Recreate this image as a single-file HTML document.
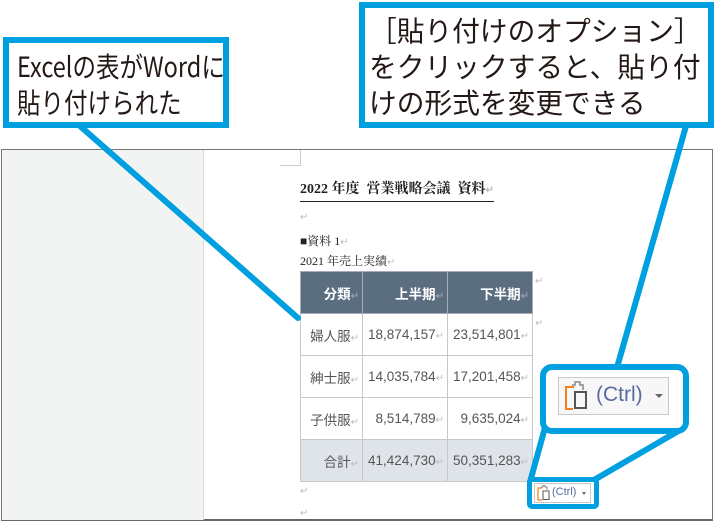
<!DOCTYPE html>
<html><head><meta charset="utf-8"><style>
body{margin:0;width:715px;height:524px;position:relative;overflow:hidden;background:#fff;font-family:"Liberation Sans","Noto Sans CJK JP",sans-serif}
.abs{position:absolute}
.win{left:1px;top:149px;width:712px;height:372px;border:1px solid #777;border-bottom:2px solid #666;box-sizing:border-box}
.side{left:2px;top:150px;width:201px;height:370px;background:#f2f3f3;border-right:1px solid #d8d8d8}
.box{border:6px solid #00a0e0;background:#fff;box-sizing:border-box;color:#231815;font-size:27px;line-height:36px;font-family:"Noto Sans CJK JP",sans-serif;white-space:nowrap;overflow:hidden}
.sx{display:inline-block;transform:scaleX(0.84);transform-origin:left}
.serif{font-family:"Liberation Serif","Noto Serif CJK SC",serif;color:#222}
table{border-collapse:collapse;position:absolute;left:300px;top:271px;font-family:"Liberation Sans","Noto Sans CJK JP",sans-serif;font-size:13.5px;color:#555}
td{border:1px solid #c8c8c8;text-align:right;padding:0 3px 0 0;height:42px;box-sizing:border-box}
.h td{background:#5b6e80;color:#fff;font-weight:bold;border-color:#aab}
.t td{background:#dfe4ea}
.m{color:#bbb;font-size:10px}
</style></head><body>
<div class="abs win"></div>
<div class="abs side"></div>
<div class="abs" style="left:280px;top:150px;width:20px;height:15px;border-right:1px solid #ccc;border-bottom:1px solid #ccc"></div>
<div class="abs serif" style="left:300px;top:178px;font-size:14px;font-weight:bold;border-bottom:1.5px solid #222;padding-bottom:3px;white-space:pre">2022 年度  営業戦略会議  資料<span class="m">↵</span></div>
<div class="abs m" style="left:300px;top:212px">↵</div>
<div class="abs serif" style="left:300px;top:232px;font-size:12px">■資料 1<span class="m">↵</span></div>
<div class="abs serif" style="left:300px;top:252px;font-size:12px">2021 年売上実績<span class="m">↵</span></div>
<table>
<tr class="h"><td style="width:62px">分類<span class="m" style="color:#99a">↵</span></td><td style="width:85px">上半期<span class="m" style="color:#99a">↵</span></td><td style="width:85px">下半期<span class="m" style="color:#99a">↵</span></td></tr>
<tr><td>婦人服<span class="m">↵</span></td><td>18,874,157<span class="m">↵</span></td><td>23,514,801<span class="m">↵</span></td></tr>
<tr><td>紳士服<span class="m">↵</span></td><td>14,035,784<span class="m">↵</span></td><td>17,201,458<span class="m">↵</span></td></tr>
<tr><td>子供服<span class="m">↵</span></td><td>8,514,789<span class="m">↵</span></td><td>9,635,024<span class="m">↵</span></td></tr>
<tr class="t"><td>合計<span class="m">↵</span></td><td>41,424,730<span class="m">↵</span></td><td>50,351,283<span class="m">↵</span></td></tr>
</table>
<div class="abs m" style="left:535px;top:276px">↵</div>
<div class="abs m" style="left:535px;top:318px">↵</div>
<div class="abs m" style="left:300px;top:486px">↵</div>
<div class="abs m" style="left:300px;top:508px">↵</div>
<svg class="abs" style="left:0;top:0" width="715" height="524">
<g stroke="#00a0e0" stroke-width="6" fill="none" stroke-linecap="round">
<line x1="80" y1="126" x2="298" y2="318"/>
<line x1="686" y1="126" x2="614" y2="378"/>
<line x1="546" y1="424" x2="530" y2="482"/>
<line x1="680" y1="430" x2="594" y2="480"/>
</g>
</svg>
<div class="abs box" style="left:3px;top:37px;width:226px;height:91px;padding:5px 0 0 8px;font-size:28px"><span class="sx">Excelの表がWordに</span><br><span class="sx">貼り付けられた</span></div>
<div class="abs box" style="left:359px;top:2px;width:355px;height:126px;padding:4px 0 0 4px;font-size:28px"><span class="sx" style="transform:scaleX(0.99)">［貼り付けのオプション］</span><br><span class="sx" style="transform:scaleX(0.99)">をクリックすると、貼り付</span><br><span class="sx" style="transform:scaleX(0.99)">けの形式を変更できる</span></div>
<div class="abs" style="left:540px;top:364px;width:149px;height:70px;border:6px solid #00a0e0;border-radius:12px;background:#fff;box-sizing:border-box"></div>
<div class="abs" style="left:558px;top:377px;width:111px;height:38px;border:1px solid #c8c8c8;background:#f7f7f7;box-sizing:border-box"></div>
<svg class="abs" style="left:564px;top:381px" width="30" height="30"><path d="M10 6H2V28H9" stroke="#f08020" stroke-width="2" fill="none"/><path d="M8 4H11V1H16V4H19V9" stroke="#888" stroke-width="1.5" fill="none"/><rect x="11" y="11" width="11" height="16" stroke="#555" stroke-width="2" fill="none"/></svg>
<div class="abs" style="left:596px;top:383px;font-size:21px;color:#5a6aa0">(Ctrl)</div>
<div class="abs" style="left:655px;top:394px;width:0;height:0;border:4px solid transparent;border-top:4px solid #666"></div>
<div class="abs" style="left:527px;top:477px;width:72px;height:32px;border:5px solid #00a0e0;border-radius:5px;background:#fff;box-sizing:border-box"></div>
<div class="abs" style="left:534px;top:483px;width:57px;height:20px;border:1px solid #c8c8c8;box-sizing:border-box"></div>
<svg class="abs" style="left:537px;top:485px" width="15" height="16"><path d="M5 3H1V15H5" stroke="#f08020" stroke-width="1.2" fill="none"/><path d="M4 2H6V0.5H8V2H10V5" stroke="#888" fill="none"/><rect x="6" y="6" width="6" height="8.5" stroke="#555" fill="none"/></svg>
<div class="abs" style="left:552px;top:486px;font-size:11px;color:#5a6aa0">(Ctrl)</div>
<div class="abs" style="left:582px;top:492px;width:0;height:0;border:2.5px solid transparent;border-top:3px solid #666"></div>
</body></html>
